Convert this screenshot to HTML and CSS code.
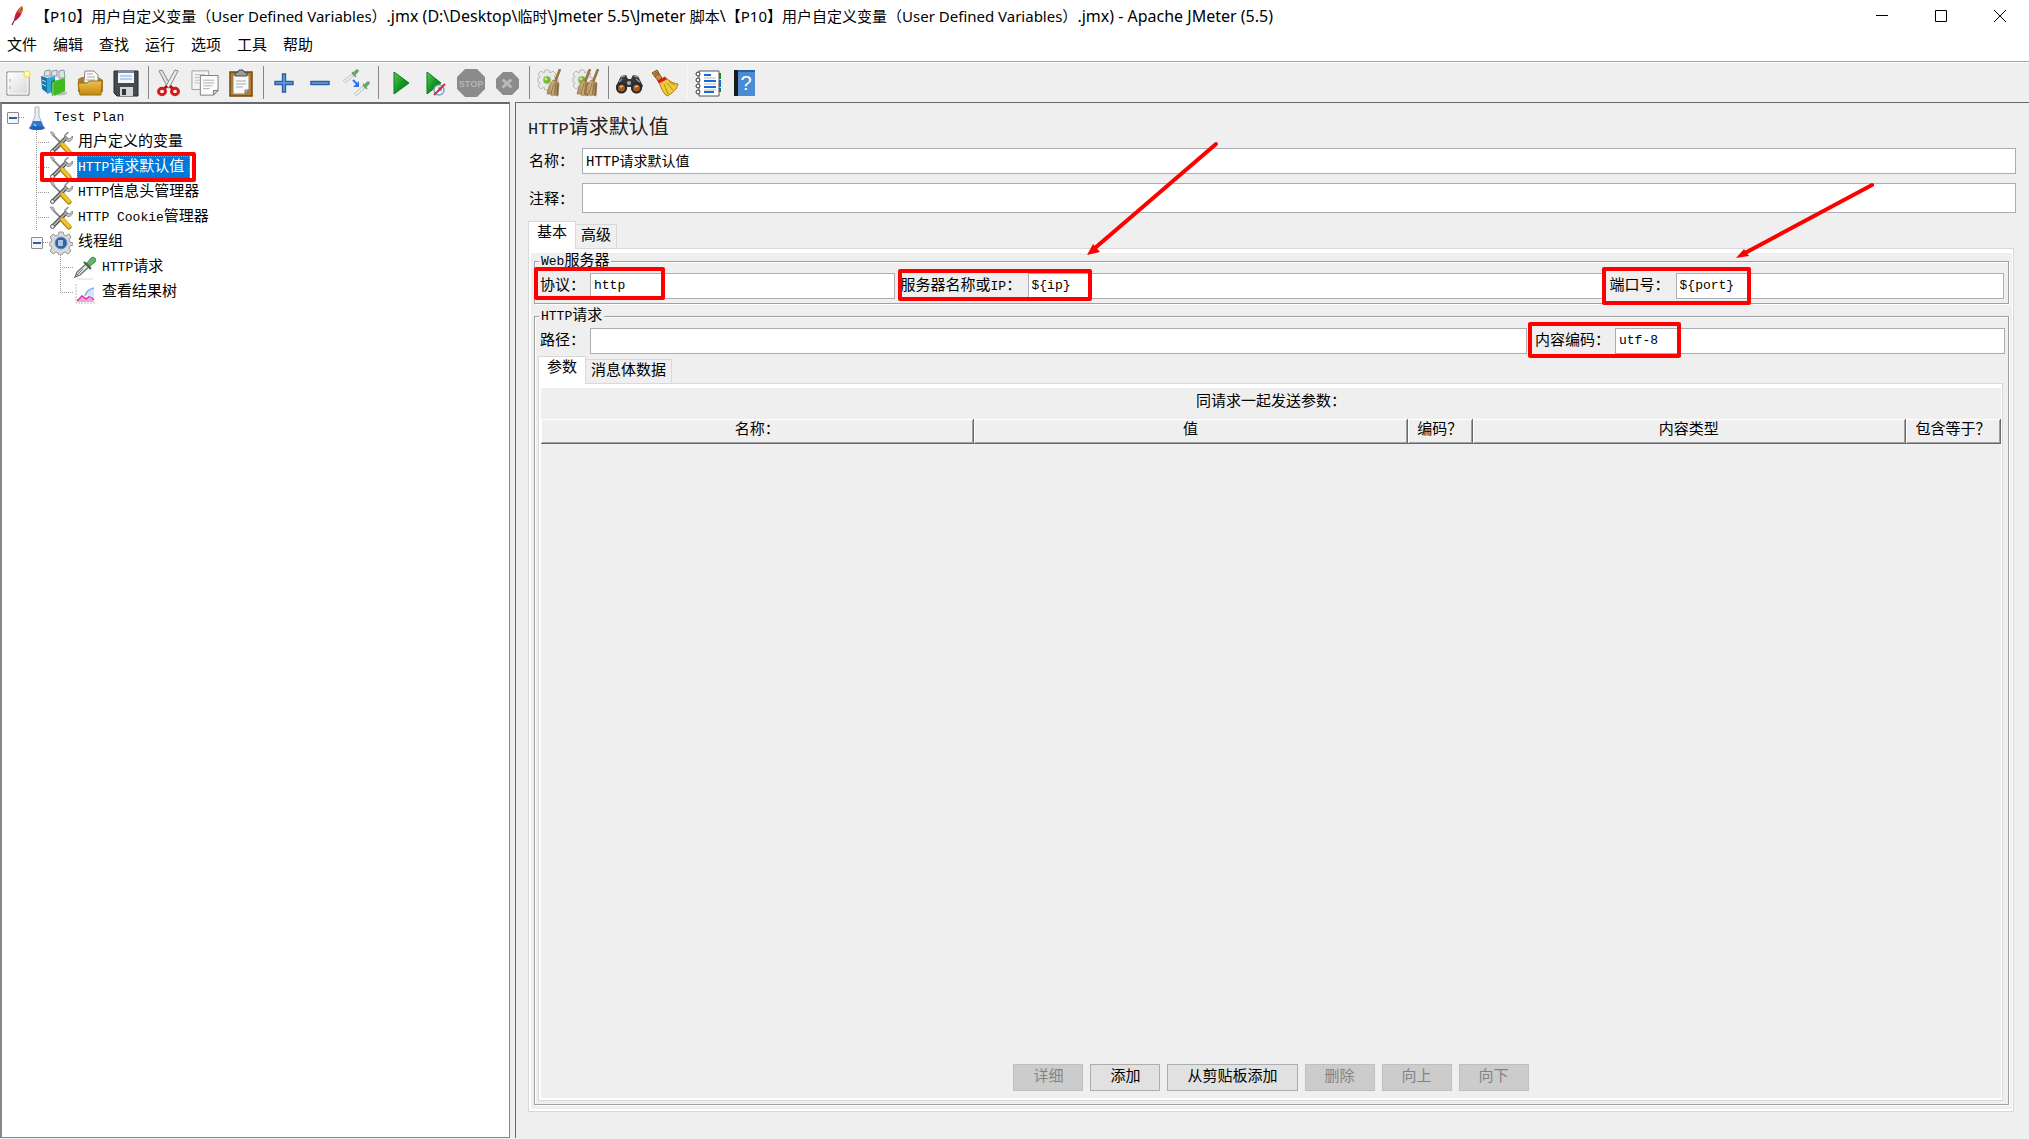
FILE: index.html
```html
<!DOCTYPE html>
<html lang="zh-CN">
<head>
<meta charset="utf-8">
<title>Apache JMeter (5.5)</title>
<link rel="stylesheet" href="styles.css">
</head>
<body>
<svg class="defs" aria-hidden="true">
  <defs>
    <linearGradient id="gold" x1="0" y1="0" x2="0" y2="1"><stop offset="0" stop-color="#f0c050"/><stop offset="1" stop-color="#c08a10"/></linearGradient>
    <linearGradient id="green" x1="0" y1="0" x2="1" y2="1"><stop offset="0" stop-color="#5cc85c"/><stop offset=".5" stop-color="#129a22"/><stop offset="1" stop-color="#0a6a14"/></linearGradient>
    <linearGradient id="paper" x1="0" y1="0" x2="1" y2="1"><stop offset="0" stop-color="#fff"/><stop offset="1" stop-color="#d8d8d8"/></linearGradient>
    <linearGradient id="bristle" x1="0" y1="0" x2="1" y2="0"><stop offset="0" stop-color="#a88456"/><stop offset=".5" stop-color="#d0b080"/><stop offset="1" stop-color="#8a6a40"/></linearGradient>
    <symbol id="tools" viewBox="0 0 24 24">
      <path d="M3 3l9 9" stroke="#8c8c8c" stroke-width="2"/>
      <path d="M1 1l3 0 2 3-2 1z" fill="#bbb" stroke="#888" stroke-width=".6"/>
      <path d="M3.500 20.500L18 6" stroke="#555" stroke-width="4"/>
      <path d="M3.500 20.500L18 6" stroke="#b8b8b8" stroke-width="1.600"/>
      <path d="M19.500 1.500l-3 3 .500 3 3.500.500 3-3c.500 3-1.500 6-5 5.500l-3-3c-.500-3.500 1.500-6 4-6z" fill="#c4c4c4" stroke="#777" stroke-width=".8"/>
      <circle cx="3.500" cy="20.500" r="2" fill="#e8e8e8" stroke="#555"/>
      <path d="M13.500 14l6.500 7" stroke="#a87c10" stroke-width="5" stroke-linecap="round"/>
      <path d="M13.500 13.500l6.500 7" stroke="#f3c326" stroke-width="3.400" stroke-linecap="round"/>
    </symbol>
    <symbol id="dropper" viewBox="0 0 24 24">
      <path d="M2 21l2-5 10-9 3 3-10 9z" fill="#e4e8e4" stroke="#666" stroke-width="1.200"/>
      <path d="M4 19l6-6" stroke="#777"/>
      <path d="M11 6l7 7" stroke="#3c6a3c" stroke-width="2"/>
      <path d="M14 7l4-5c3-2 6 1 4 4l-5 4z" fill="#6ab36a" stroke="#3f8a46"/>
      <path d="M4 23h16" stroke="#ccc" stroke-width=".8"/>
    </symbol>
    <symbol id="cog" viewBox="0 0 22 22">
      <path d="M8 1h4l1 3 3-2 3 3-2 3 4 1v4l-4 1 2 3-3 3-3-2-1 3H8l-1-3-3 2-3-3 2-3-2-1V9l2-1-2-3 3-3 3 2z" fill="#e9ebe8" stroke="#b4b7b3"/>
      <circle cx="10" cy="11" r="4" fill="#73b828" stroke="#c5ccc0"/><circle cx="9" cy="10" r="1.500" fill="#c3ef80"/>
    </symbol>
    <symbol id="brush" viewBox="0 0 16 28">
      <path d="M14 0l-5 13" stroke="#9a7442" stroke-width="2.600"/>
      <path d="M7 11l6 3-1 13-4-1-2 1-2-2-3 0 2-8z" fill="url(#bristle)" stroke="#8d6d42" stroke-width=".6"/>
      <path d="M8 14l-3 11M10 15l-2 11M12 16l-1 10" stroke="#6f522c" stroke-width=".6"/>
    </symbol>
  </defs>
</svg>

<header class="titlebar">
  <svg class="feather" viewBox="0 0 14 20"><path d="M1 19l2-4" stroke="#6a2a55" stroke-width="1.200"/><path d="M3 15C3 10 6 3 11 0l1 2c0 5-4 11-8 13z" fill="#cb2138"/><path d="M7 6c1-3 3-5 4-6l1 2c0 2-1 4-2 6z" fill="#f0802a"/><path d="M3 15c4-4 6-9 8-13" stroke="#6e1f55" stroke-width=".8" fill="none"/></svg>
  <h1 class="title">【P10】用户自定义变量（User Defined Variables）<span class="path-part">.jmx (D:\Desktop\</span>临时<span class="path-part">\Jmeter 5.5\Jmeter </span>脚本<span class="path-part">\</span>【P10】用户自定义变量（User Defined Variables）<span class="path-part">.jmx) - Apache JMeter (5.5)</span></h1>
  <div class="window-controls">
    <button aria-label="最小化"><svg viewBox="0 0 12 12"><path d="M0 5.500h12" stroke="#000"/></svg></button>
    <button aria-label="最大化"><svg viewBox="0 0 12 12"><path d="M.5.5h11v11H.5z" fill="none" stroke="#000"/></svg></button>
    <button aria-label="关闭"><svg viewBox="0 0 12 12"><path d="M0 0l12 12M12 0L0 12" stroke="#000"/></svg></button>
  </div>
</header>

<nav class="menubar">
  <button>文件</button><button>编辑</button><button>查找</button><button>运行</button><button>选项</button><button>工具</button><button>帮助</button>
</nav>

<div class="toolbar" role="toolbar">
  <button aria-label="新建"><svg viewBox="0 0 28 28"><path d="M3 3h22v23H3z" fill="url(#paper)" stroke="#777"/><path d="M4 4h20v21H4z" fill="none" stroke="#fff"/><path d="M6 10v3M6 17v3" stroke="#aaa"/><circle cx="23" cy="5" r="3" fill="#fffbd0" stroke="#f1e36a" stroke-width="1.500"/></svg></button>
  <button aria-label="模板"><svg viewBox="0 0 28 28"><path d="M5 2l5-1v6H4zM12 2l5-1v6h-6zM19 2l5-1 1 8h-6z" fill="#dfe4e6" stroke="#8c989c"/><ellipse cx="19" cy="24" rx="8" ry="2.500" fill="#bbb"/><path d="M1 7l6 2v15l-5-4z" fill="#1476a8"/><path d="M7 9l8-2v15l-8 3z" fill="#2fa4d6"/><path d="M2 11l4 2M2 15l4 2" stroke="#bfe6f7"/><path d="M11 13l4-3v15l-3 2z" fill="#1c7d18"/><path d="M14 12l11-3v13l-11 5z" fill="#3fbb22"/><path d="M13 13v13" stroke="#bff2a8"/></svg></button>
  <button aria-label="打开"><svg viewBox="0 0 28 28"><path d="M2 10l4-2h16l5 3v12H2z" fill="#a87c28"/><path d="M8 12l1-10h9l4 4v8H8z" fill="#fafafa" stroke="#888"/><path d="M11 5h6M11 8h8M10 11h9" stroke="#aaa"/><path d="M2 14h9l2-2h13l-1 14H4z" fill="url(#gold)" stroke="#9b7017"/></svg></button>
  <button aria-label="保存"><svg viewBox="0 0 28 28"><path d="M2 2h24v25H5l-3-3z" fill="#454a50" stroke="#25282c"/><path d="M6 2h16v12H6z" fill="#f2f6fa"/><path d="M6 2h16v2H6z" fill="#678fb8"/><path d="M8 7h12M8 10h12" stroke="#a8c2df" stroke-width="1.500"/><path d="M8 18h13v9H8z" fill="#d4d6d8"/><path d="M10 20h4v6h-4z" fill="#303438"/></svg></button>
  <span class="sep"></span>
  <button aria-label="剪切"><svg viewBox="0 0 28 28"><path d="M4 2l3-1 9 16-3 2z" fill="#dfe2e2" stroke="#828787"/><path d="M23 2l-3-1-9 16 3 2z" fill="#eceeee" stroke="#828787"/><path d="M12 17l-3 3M15 17l3 3" stroke="#b81010" stroke-width="3"/><ellipse cx="7" cy="22.500" rx="3.500" ry="3.200" fill="#efefef" stroke="#d41a1a" stroke-width="3"/><ellipse cx="20" cy="22.500" rx="3.500" ry="3.200" fill="#efefef" stroke="#d41a1a" stroke-width="3"/></svg></button>
  <button aria-label="复制"><svg viewBox="0 0 30 28"><path d="M1 1h18v20H1z" fill="#f4f4f4" stroke="#9b9b9b"/><path d="M4 5h11M4 8h5M4 11h5M4 14h5" stroke="#bbb"/><path d="M10 6h19v16l-5 5H10z" fill="#fcfcfc" stroke="#777"/><path d="M13 11h12M13 14h12M13 17h10M13 20h7" stroke="#aaa"/><path d="M24 27v-5h5z" fill="#d0d0d0" stroke="#777"/></svg></button>
  <button aria-label="粘贴"><svg viewBox="0 0 28 28"><path d="M3 3h22v24H3z" fill="#b87b1f" stroke="#75480c" stroke-width="1.500"/><path d="M6 6h16v15l-4 4H6z" fill="#f8f8f8" stroke="#888"/><path d="M9 12h10M9 15h10M9 18h7" stroke="#aaa"/><path d="M18 25v-4h4z" fill="#bbb" stroke="#777"/><path d="M8 4l3-1 1-2h4l1 2 3 1v3H8z" fill="#9c9c9c" stroke="#4a4a4a"/></svg></button>
  <span class="sep"></span>
  <button aria-label="展开"><svg viewBox="0 0 28 28"><path d="M12.500 5h3v7.500H23v3h-7.500V23h-3v-7.500H5v-3h7.500z" fill="#6b9fd8" stroke="#2c5fa4" stroke-width="1.400"/></svg></button>
  <button aria-label="折叠"><svg viewBox="0 0 28 28"><path d="M5 12.500h18v3H5z" fill="#6b9fd8" stroke="#2c5fa4" stroke-width="1.400"/></svg></button>
  <button aria-label="切换"><svg viewBox="0 0 28 28"><path d="M2 13L12 5" stroke="#b4b8b4" stroke-width="3.500"/><path d="M2 13L12 5" stroke="#eef0ee" stroke-width="2"/><path d="M10 3l4 5" stroke="#7c987c" stroke-width="1.500"/><path d="M12 5l3-3" stroke="#69a569" stroke-width="3.500" stroke-linecap="round"/><path d="M13 26l10-9" stroke="#b4b8b4" stroke-width="3.500"/><path d="M13 26l10-9" stroke="#eef0ee" stroke-width="2"/><path d="M21 15l4 5" stroke="#7c987c" stroke-width="1.500"/><path d="M23 17l3-3" stroke="#69a569" stroke-width="3.500" stroke-linecap="round"/><path d="M11 11l5 5" stroke="#2a78ea" stroke-width="2"/><path d="M17 12v6h-6z" fill="#2a78ea"/></svg></button>
  <span class="sep"></span>
  <button aria-label="启动"><svg viewBox="0 0 28 28"><path d="M9 3l15 11L9 25z" fill="url(#green)" stroke="#0c7a18"/></svg></button>
  <button aria-label="不停顿开始"><svg viewBox="0 0 28 28"><path d="M6 3l14 11L6 25z" fill="url(#green)" stroke="#0c7a18"/><circle cx="18" cy="21" r="5" fill="#eef4fb" stroke="#7da3cc" stroke-width="1.500"/><path d="M18 18v3h3" stroke="#456" fill="none"/><path d="M13 26L24 15" stroke="#d5252b" stroke-width="1.800"/></svg></button>
  <button aria-label="停止" disabled><svg viewBox="0 0 28 28"><path d="M8 0h12l8 8v12l-8 8H8l-8-8V8z" fill="#8b8b8b"/><text x="14" y="18" text-anchor="middle" class="stop-text">STOP</text></svg></button>
  <button aria-label="关闭" disabled><svg viewBox="0 0 28 28"><path d="M10 3h9l7 7v9l-7 7h-9l-7-7v-9z" fill="#8b8b8b"/><path d="M9.500 10.500l9 8M18.500 10.500l-9 8" stroke="#b9b9b9" stroke-width="3"/></svg></button>
  <span class="sep"></span>
  <button aria-label="清除"><svg viewBox="0 0 28 28"><use href="#cog" x="1" y="0" width="22" height="22"/><use href="#brush" x="9" y="0" width="18" height="28"/></svg></button>
  <button aria-label="清除全部"><svg viewBox="0 0 28 28"><use href="#cog" x="0" y="0" width="22" height="22"/><use href="#brush" x="3" y="0" width="18" height="28"/><use href="#brush" x="11" y="0" width="18" height="28"/></svg></button>
  <span class="sep"></span>
  <button aria-label="查找"><svg viewBox="0 0 28 28"><path d="M1 17l5-10 5-1 2 4h3l2-4 5 1 5 10-3 5h-8l-1-4h-4l-1 4H3z" fill="#34373a"/><path d="M6 8l4-1M19 7l4 1M4 13l3-3M21 10l4 3" stroke="#909498" stroke-width="1.500"/><circle cx="6.500" cy="19" r="4.500" fill="#a65a20" stroke="#24272a" stroke-width="2"/><circle cx="21.500" cy="19" r="4.500" fill="#a65a20" stroke="#24272a" stroke-width="2"/><circle cx="14" cy="14" r="2" fill="#aaa"/><path d="M5 18l3-1M20 18l3-1" stroke="#eebc85" stroke-width="1.500"/></svg></button>
  <button aria-label="重置搜索"><svg viewBox="0 0 28 28"><path d="M1 4l5-3 6 10-4 2z" fill="#c98f3c" stroke="#7b501a"/><path d="M3 5l4-2M4 7l4-2" stroke="#7b501a"/><path d="M8 12l7-3c4 3 6 5 12 6-1 5-5 9-11 12-3-2-6-7-8-15z" fill="#f0cb35" stroke="#a47c12"/><path d="M13 15l4 10M16 14l6 7M18 13l6 3" stroke="#b58a17" fill="none"/><path d="M7 13l8-4" stroke="#d61d20" stroke-width="3.500"/></svg></button>
  <span class="sep sep-light"></span>
  <button aria-label="函数助手"><svg viewBox="0 0 28 28"><path d="M5 2h20v25H5z" fill="#fff" stroke="#555"/><path d="M26 4v6M26 19v4" stroke="#138b2c" stroke-width="2"/><path d="M26 11v7" stroke="#1769e0" stroke-width="2"/><path d="M10 6h7M10 12h12M10 18h12M10 23h10" stroke="#1769e0" stroke-width="2"/><path d="M10 9h12M10 15h12M10 21h12" stroke="#bbb"/><g fill="#fff" stroke="#333"><circle cx="4" cy="5" r="2"/><circle cx="4" cy="11" r="2"/><circle cx="4" cy="17" r="2"/><circle cx="4" cy="23" r="2"/></g></svg></button>
  <button aria-label="帮助"><svg viewBox="0 0 28 28"><path d="M4 1h21v26H4z" fill="#4b8bd6"/><path d="M4 1h4v26H4z" fill="#17191c"/><path d="M8 1h17v2H8z" fill="#2b5f9e"/><text x="16" y="21" text-anchor="middle" class="help-text">?</text></svg></button>
</div>

<main class="workspace">
  <aside class="tree" role="tree">
    <div class="row" role="treeitem"><span class="box"></span><span class="stub"></span><svg class="icon" viewBox="0 0 24 24"><path d="M10 1h4v9l5 12H5l5-12z" fill="#e6edf4" stroke="#aab6c2"/><path d="M8 15h8l3 7H5z" fill="#2b7bd0"/><ellipse cx="12" cy="22" rx="8" ry="2" fill="#1d63b2"/><path d="M9 18l2 2" stroke="#9ccaf5" stroke-width="1.500"/></svg><span class="label en">Test Plan</span></div>
    <div class="row level-1" role="treeitem"><span class="guide"></span><svg class="icon"><use href="#tools"/></svg><span class="label">用户定义的变量</span></div>
    <div class="row level-1" role="treeitem" aria-selected="true"><span class="guide"></span><svg class="icon"><use href="#tools"/></svg><span class="label selected"><span class="en">HTTP</span>请求默认值</span><span class="mark mark-tree"></span></div>
    <div class="row level-1" role="treeitem"><span class="guide"></span><svg class="icon"><use href="#tools"/></svg><span class="label"><span class="en">HTTP</span>信息头管理器</span></div>
    <div class="row level-1" role="treeitem"><span class="guide"></span><svg class="icon"><use href="#tools"/></svg><span class="label"><span class="en">HTTP Cookie</span>管理器</span></div>
    <div class="row branch" role="treeitem"><span class="box"></span><span class="stub"></span><svg class="icon" viewBox="0 0 24 24"><path d="M10 1h4l1 3 2 1 3-2 2 3-2 3 1 2 3 1v2l-3 1-1 2 2 3-3 3-3-2-2 1-1 2h-3l-1-2-2-1-3 2-3-3 2-3-1-2-2-1v-2l2-1 1-2-2-3 3-3 3 2 2-1z" fill="#d8d9da" stroke="#949698"/><circle cx="12" cy="12" r="6" fill="#2d62a8" stroke="#7390b5"/><path d="M9 9h5v6H9z" fill="#a9c4e4"/></svg><span class="label">线程组</span></div>
    <div class="row level-2" role="treeitem"><span class="guide"></span><svg class="icon"><use href="#dropper"/></svg><span class="label"><span class="en">HTTP</span>请求</span></div>
    <div class="row level-2" role="treeitem"><span class="guide guide-last"></span><svg class="icon" viewBox="0 0 24 24"><path d="M3 3v19h19" stroke="#bbb" fill="none" stroke-dasharray="2 1"/><path d="M4 21l5-7 4 3 4-3 4 7z" fill="#f0a6dd"/><path d="M4 20l5-5 4 3 4-3 4 4" fill="none" stroke="#d73a9e" stroke-width="1.500"/><path d="M13 14c1-5 4-6 8-7v10" fill="#d3e6fb"/><path d="M12 15c1-5 4-7 9-8" fill="none" stroke="#7cb2ed" stroke-width="1.500"/></svg><span class="label">查看结果树</span></div>
  </aside>

  <section class="editor">
    <h2 class="heading"><span class="en">HTTP</span>请求默认值</h2>
    <div class="form-row"><label for="name">名称：</label><input id="name" class="field mixed" value="HTTP请求默认值"></div>
    <div class="form-row comment"><label for="comment">注释：</label><input id="comment" class="field"></div>

    <div class="tabs" role="tablist"><button role="tab" class="tab active" aria-selected="true">基本</button><button role="tab" class="tab">高级</button></div>
    <div class="pane outer">
      <fieldset>
        <legend><span class="en">Web</span>服务器</legend>
        <div class="server-row">
          <div class="group protocol"><label for="protocol">协议：</label><input id="protocol" class="field" value="http"><span class="mark mark-protocol"></span></div>
          <div class="group server"><label for="server">服务器名称或<span class="en">IP</span>：</label><input id="server" class="field" value="${ip}"><span class="mark mark-server"></span>
            <svg class="arrow arrow-server" viewBox="0 0 134 116"><path d="M131 3L10 107" stroke="#f00" stroke-width="4" stroke-linecap="round"/><path d="M2 114l6-11 7 8z" fill="#f00"/></svg></div>
          <div class="group port"><label for="port">端口号：</label><input id="port" class="field" value="${port}"><span class="mark mark-port"></span>
            <svg class="arrow arrow-port" viewBox="0 0 142 79"><path d="M138 3L11 71" stroke="#f00" stroke-width="4" stroke-linecap="round"/><path d="M2 76l8-9 5 7z" fill="#f00"/></svg></div>
        </div>
      </fieldset>
      <fieldset class="request">
        <legend><span class="en">HTTP</span>请求</legend>
        <div class="path-row">
          <div class="group path"><label for="path">路径：</label><input id="path" class="field"></div>
          <div class="group encoding"><label for="encoding">内容编码：</label><input id="encoding" class="field" value="utf-8"><span class="mark mark-encoding"></span></div>
        </div>
        <div class="tabs" role="tablist"><button role="tab" class="tab active" aria-selected="true">参数</button><button role="tab" class="tab">消息体数据</button></div>
        <div class="pane inner">
          <table>
            <caption>同请求一起发送参数：</caption>
            <colgroup><col><col><col class="col-encode"><col><col class="col-equals"></colgroup>
            <thead><tr><th>名称：</th><th>值</th><th>编码？</th><th>内容类型</th><th>包含等于？</th></tr></thead>
          </table>
          <div class="actions">
            <button disabled>详细</button><button>添加</button><button>从剪贴板添加</button><button disabled>删除</button><button disabled>向上</button><button disabled>向下</button>
          </div>
        </div>
      </fieldset>
    </div>
  </section>
</main>
</body>
</html>
```
FILE: styles.css
```css
* { box-sizing: border-box; }
body {
  margin: 0;
  height: 100vh;
  display: flex;
  flex-direction: column;
  background: #fff;
  color: #000;
  font: 15px/20px "Liberation Mono", "Noto Sans CJK SC", monospace;
}
button, input { font: inherit; color: inherit; border-radius: 0; }
button { padding: 0; border: 0; background: none; white-space: nowrap; }
.defs { position: absolute; width: 0; height: 0; }
.en { font-size: 13px; }

/* Window frame */
.titlebar { display: flex; align-items: center; height: 32px; padding-left: 11px; }
.feather { width: 14px; height: 20px; margin-right: 10px; }
.title {
  flex: 1;
  margin: 0;
  font: 15px/20px "Noto Sans", "Noto Sans CJK SC", sans-serif;
  white-space: nowrap;
}
.path-part { font-size: 16px; }
.window-controls { display: flex; }
.window-controls button { width: 59px; height: 32px; }
.window-controls svg { display: block; width: 12px; height: 12px; margin: 0 auto; }
.menubar {
  display: flex;
  gap: 16px;
  height: 30px;
  padding: 5px 7px 0;
  border-bottom: 1px solid #a0a0a0;
}
.menubar button { height: 20px; }

/* Toolbar */
.toolbar {
  display: flex;
  align-items: center;
  height: 40px;
  border-top: 1px solid #fff;
  background: #efefef;
}
.toolbar button { display: flex; align-items: center; justify-content: center; width: 36px; height: 32px; }
.toolbar svg { width: 28px; height: 28px; }
.sep { width: 1px; height: 33px; margin: 0 2px 0 4px; background: #858585; }
.sep-light { background: #f8f8f8; }
.stop-text { font: bold 9px "Liberation Sans", sans-serif; fill: #b5b5b5; }
.help-text { font: 20px "Liberation Sans", sans-serif; fill: #fff; }

/* Tree */
.workspace { flex: 1; display: grid; grid-template-columns: 510px 1fr; gap: 5px; min-height: 0; padding-bottom: 1px; background: #efefef; }
.tree { padding: 1px 0 0 5px; border: 2px solid #828790; border-width: 2px 1px 1px 2px; border-top-color: #696969; background: #fff; }
.row { position: relative; display: flex; align-items: center; height: 25px; }
.row.level-1 { padding-left: 29px; }
.row.branch { padding-left: 24px; }
.row.level-2 { padding-left: 53px; }
.box {
  width: 12px;
  height: 12px;
  border: 1px solid #8c8c8c;
  border-radius: 1px;
  background: linear-gradient(#2f5db0, #2f5db0) center / 8px 2px no-repeat #f6f6f6;
}
.stub { width: 6px; height: 1px; background: repeating-linear-gradient(90deg, #999 0 1px, transparent 1px 2px); }
.guide {
  align-self: stretch;
  width: 13px;
  background:
    repeating-linear-gradient(#999 0 1px, transparent 1px 2px) left / 1px 100% no-repeat,
    repeating-linear-gradient(90deg, #999 0 1px, transparent 1px 2px) center / 100% 1px no-repeat;
}
.guide-last {
  background:
    repeating-linear-gradient(#999 0 1px, transparent 1px 2px) left top / 1px 50% no-repeat,
    repeating-linear-gradient(90deg, #999 0 1px, transparent 1px 2px) center / 100% 1px no-repeat;
}
.icon { width: 24px; height: 24px; margin-right: 4px; }
.label { padding: 0 1px; line-height: 23px; white-space: nowrap; }
.selected { padding-right: 6px; color: #fff; background: #0078d7; outline: 1px dotted #ff8728; outline-offset: -1px; }

/* Editor */
.editor {
  display: flex;
  flex-direction: column;
  min-width: 0;
  padding: 8px 13px 26px 12px;
  border-top: 1px solid #696969;
  border-left: 1px solid #696969;
}
.heading { margin: 0; font-size: 20px; line-height: 36px; font-weight: normal; color: #222; }
.heading .en { font-size: 17px; }
.form-row { display: flex; align-items: center; height: 26px; margin-bottom: 9px; }
.form-row.comment { height: 30px; margin-bottom: 8px; }
.form-row label { width: 54px; padding: 3px 0 0 1px; }
.form-row .field { height: 100%; }
label { flex: none; white-space: nowrap; }
.comment label { padding-top: 6px; }
.field {
  flex: 1;
  min-width: 0;
  height: 26px;
  padding: 0 3px 1px;
  border: 1px solid #abadb3;
  background: #fff;
  font-size: 13px;
}
.field.mixed { padding-bottom: 2px; font-size: 14px; }

.tabs { display: flex; align-items: flex-end; margin-bottom: -1px; }
.tab {
  height: 25px;
  padding: 0 5px;
  border: 1px solid #d9d9d9;
  border-left: 0;
}
.tab.active {
  position: relative;
  height: 28px;
  padding: 0 8px 4px;
  border-left: 1px solid #d9d9d9;
  border-bottom: 0;
  background: #fff;
}
.pane { flex: 1; display: flex; flex-direction: column; min-height: 0; border: 1px solid #d9d9d9; }
.outer { margin-right: 2px; padding: 4px 4px 6px 5px; box-shadow: inset 2px 4px #fff, inset -1px -2px #fff; }
.inner { margin: 0 2px 0 0; padding: 4px 1px 2px 2px; box-shadow: inset 2px 4px #fff, inset -1px -2px #fff; }

fieldset {
  min-width: 0;
  margin: 0 0 4px;
  padding: 3px;
  border: 1px solid #a0a0a0;
  box-shadow: 1px 1px #fff, inset 1px 1px #fff;
}
legend { margin-left: 1px; padding: 0 2px; line-height: 17px; background: #efefef; }
fieldset.request { flex: 1; display: flex; flex-direction: column; margin: 0; }
.server-row { display: flex; gap: 6px; padding: 0 1px 1px 2px; }
.path-row { display: flex; gap: 8px; margin-bottom: 2px; padding-left: 2px; }
.group { position: relative; display: flex; align-items: center; min-width: 0; }
.protocol { flex: 355 1 0; }
.server { flex: 704 1 0; }
.port { flex: 395 1 0; }
.path { flex: 987 1 0; }
.encoding { flex: 470 1 0; }
.group label { padding-top: 2px; }
.protocol label, .path label { width: 50px; }
.server label { width: 127px; }
.port label { width: 66px; }
.encoding label { width: 80px; }

/* Parameter table */
table { width: 100%; table-layout: fixed; border-collapse: separate; border-spacing: 0; }
caption { height: 31px; line-height: 29px; }
.col-encode { width: 65px; }
.col-equals { width: 95px; }
th {
  height: 25px;
  padding: 0;
  border: solid #696969;
  border-width: 0 1px 1px 0;
  box-shadow: inset 1px 1px #fff, inset -1px -1px #a0a0a0;
  font-weight: normal;
  white-space: nowrap;
}
.actions { display: flex; justify-content: center; gap: 7px; margin-top: auto; padding-bottom: 7px; }
.actions button { height: 27px; padding: 0 19px; border: 1px solid #adadad; background: #e1e1e1; }
.actions button:disabled { border-color: #bfbfbf; background: #ccc; color: #838383; }

/* Red call-outs */
.mark { position: absolute; border: 4px solid #f00; border-radius: 2px; pointer-events: none; }
.mark-tree { left: 33px; top: -3px; width: 156px; height: 30px; }
.mark-protocol { left: -6px; top: -6px; width: 131px; height: 33px; }
.mark-server { left: -3px; top: -4px; width: 194px; height: 32px; }
.mark-port { left: -8px; top: -6px; width: 149px; height: 38px; }
.mark-encoding { left: -7px; top: -6px; width: 153px; height: 36px; }
.arrow { position: absolute; pointer-events: none; }
.arrow-server { left: 184px; top: -132px; width: 134px; height: 116px; }
.arrow-port { left: 124px; top: -91px; width: 142px; height: 79px; }
```
